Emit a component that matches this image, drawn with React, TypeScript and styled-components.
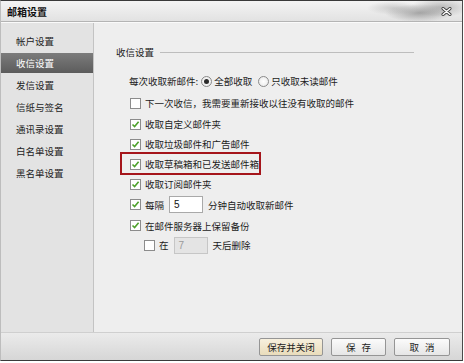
import React from "react";
import styled, { createGlobalStyle } from "styled-components";

const GlobalStyle = createGlobalStyle`
  body {
    margin: 0;
    background: #ffffff;
    font-family: "Noto Sans CJK SC", "Noto Sans", sans-serif;
    font-size: 9.5px;
    color: #1c1c1c;
  }
`;

const Window = styled.div`
  width: 461px;
  height: 359px;
  display: flex;
  flex-direction: column;
  border-top: 1px solid #3a3a3a;
  border-right: 1px solid #4a4a4a;
  border-bottom: 1px solid #3a3a3a;
  border-left: 1px solid #bdbdbd;
  background: #eeeeee;
`;

const TitleBar = styled.div`
  height: 20px;
  flex-shrink: 0;
  display: flex;
  align-items: center;
  justify-content: space-between;
  padding: 0 10px 0 6px;
  border-bottom: 1px solid #b4b4b4;
  background:
    radial-gradient(ellipse 34px 9px at 418px 12px, rgba(110, 110, 110, 0.55), transparent),
    radial-gradient(ellipse 26px 7px at 392px 7px, rgba(140, 140, 140, 0.35), transparent),
    radial-gradient(ellipse 30px 10px at 440px 6px, rgba(120, 120, 120, 0.45), transparent),
    linear-gradient(#f4f4f4, #e2e2e2);
`;

const Title = styled.span`
  font-size: 10px;
  font-weight: bold;
  color: #111;
`;

const Body = styled.div`
  flex: 1;
  display: flex;
  min-height: 0;
  border-top: 1px solid #fafafa;
`;

const Sidebar = styled.nav`
  width: 92px;
  flex-shrink: 0;
  background: #e3e3e3;
  border-right: 1px solid #c3c3c3;
  display: flex;
  flex-direction: column;
  gap: 2px;
  padding-top: 8px;
`;

const NavItem = styled.div<{ $active?: boolean }>`
  height: 20px;
  display: flex;
  align-items: center;
  padding-left: 15px;
  color: ${(p) => (p.$active ? "#ffffff" : "#222")};
  background: ${(p) =>
    p.$active ? "linear-gradient(#7c7c7c, #5c5c5c)" : "transparent"};
`;

const Content = styled.section`
  flex: 1;
  padding: 23px 0 0 22px;
`;

const SectionHeader = styled.div`
  display: flex;
  align-items: center;
  gap: 6px;
  width: 298px;
  height: 12px;

  &::after {
    content: "";
    flex: 1;
    height: 1px;
    background: #bdbdbd;
  }
`;

const Options = styled.div`
  padding-left: 13px;
  margin-top: 12px;
  display: flex;
  flex-direction: column;
`;

const Row = styled.div<{ $h?: number; $indent?: number; $marked?: boolean }>`
  position: relative;
  height: ${(p) => p.$h ?? 20}px;
  display: flex;
  align-items: center;
  padding-left: ${(p) => p.$indent ?? 0}px;

  ${(p) =>
    p.$marked &&
    `
    &::after {
      content: "";
      position: absolute;
      left: -9px;
      top: -2px;
      width: 137px;
      height: 19px;
      border: 2px solid #a5151b;
    }
  `}
`;

const Box = styled.span`
  width: 9px;
  height: 9px;
  margin-left: 1px;
  margin-right: 4px;
  border: 1px solid #8c8c8c;
  background: #ffffff;
  display: inline-flex;
  align-items: center;
  justify-content: center;
  flex-shrink: 0;
`;

const RadioDot = styled.span<{ $on?: boolean }>`
  width: 9px;
  height: 9px;
  border-radius: 50%;
  border: 1px solid #8a8a8a;
  background: radial-gradient(circle, #ffffff, #e6e6e6);
  display: inline-flex;
  align-items: center;
  justify-content: center;
  margin: 0 2px 0 3px;

  &::after {
    content: "";
    width: 5px;
    height: 5px;
    border-radius: 50%;
    background: ${(p) => (p.$on ? "#2b2b2b" : "transparent")};
  }
`;

const NumberBox = styled.span<{ $disabled?: boolean }>`
  width: 28px;
  height: 15px;
  margin: 0 5px;
  padding-left: 4px;
  display: inline-flex;
  align-items: center;
  border: 1px solid ${(p) => (p.$disabled ? "#c6c6c6" : "#a9a9a9")};
  background: ${(p) => (p.$disabled ? "#e4e4e4" : "#ffffff")};
  color: ${(p) => (p.$disabled ? "#9a9a9a" : "#111")};
  font-family: "Liberation Sans", sans-serif;
  font-size: 10px;
`;

const Gap = styled.span<{ $w: number }>`
  display: inline-block;
  width: ${(p) => p.$w}px;
`;

const Footer = styled.footer`
  height: 27px;
  flex-shrink: 0;
  display: flex;
  align-items: center;
  justify-content: flex-end;
  gap: 8px;
  padding-right: 12px;
  border-top: 1px solid #cfcfcf;
  background: linear-gradient(#ebebeb, #d6d6d6);
`;

const Button = styled.button<{ $primary?: boolean; $w: number }>`
  width: ${(p) => p.$w}px;
  height: 18px;
  padding: 0;
  border: 1px solid #959595;
  border-radius: 2px;
  font-family: "Noto Sans CJK SC", sans-serif;
  font-size: 9.5px;
  color: #1c1c1c;
  word-spacing: 4px;
  background: ${(p) =>
    p.$primary
      ? "linear-gradient(#f7f0de, #e9dcbb)"
      : "linear-gradient(#fbfbfb, #e6e6e6)"};
`;

const Check = () => (
  <svg width="9" height="9" viewBox="0 0 9 9">
    <path d="M1.5 4.5 L3.6 6.6 L7.6 1.8" fill="none" stroke="#4ea12b" strokeWidth="1.6" />
  </svg>
);

const CloseIcon = () => (
  <svg width="11" height="9" viewBox="0 0 11 9">
    <path d="M2 1.5 L9 7.5 M9 1.5 L2 7.5" stroke="#3a3a3a" strokeWidth="3" strokeLinecap="round" />
    <path d="M2 1.5 L9 7.5 M9 1.5 L2 7.5" stroke="#ffffff" strokeWidth="1.4" strokeLinecap="round" />
  </svg>
);

const navItems = ["帐户设置", "收信设置", "发信设置", "信纸与签名", "通讯录设置", "白名单设置", "黑名单设置"];

const Checkbox = ({ checked }: { checked?: boolean }) => <Box>{checked && <Check />}</Box>;

const App = () => {
  return (
    <>
      <GlobalStyle />
      <Window>
        <TitleBar>
          <Title>邮箱设置</Title>
          <CloseIcon />
        </TitleBar>
        <Body>
          <Sidebar>
            {navItems.map((item) => (
              <NavItem key={item} $active={item === "收信设置"}>
                {item}
              </NavItem>
            ))}
          </Sidebar>
          <Content>
            <SectionHeader>收信设置</SectionHeader>
            <Options>
              <Row $h={22}>
                每次收取新邮件:
                <RadioDot $on />
                全部收取
                <Gap $w={3} />
                <RadioDot />
                只收取未读邮件
              </Row>
              <Row $h={22}>
                <Checkbox />
                下一次收信，我需要重新接收以往没有收取的邮件
              </Row>
              <Row>
                <Checkbox checked />
                收取自定义邮件夹
              </Row>
              <Row>
                <Checkbox checked />
                收取垃圾邮件和广告邮件
              </Row>
              <Row $marked>
                <Checkbox checked />
                收取草稿箱和已发送邮件箱
              </Row>
              <Row>
                <Checkbox checked />
                收取订阅邮件夹
              </Row>
              <Row $h={21}>
                <Checkbox checked />
                每隔
                <NumberBox>5</NumberBox>
                分钟自动收取新邮件
              </Row>
              <Row $h={21}>
                <Checkbox checked />
                在邮件服务器上保留备份
              </Row>
              <Row $h={18} $indent={14}>
                <Checkbox />
                在
                <NumberBox $disabled>7</NumberBox>
                天后删除
              </Row>
            </Options>
          </Content>
        </Body>
        <Footer>
          <Button $primary $w={64}>保存并关闭</Button>
          <Button $w={55}>保 存</Button>
          <Button $w={56}>取 消</Button>
        </Footer>
      </Window>
    </>
  );
};

export default App;
